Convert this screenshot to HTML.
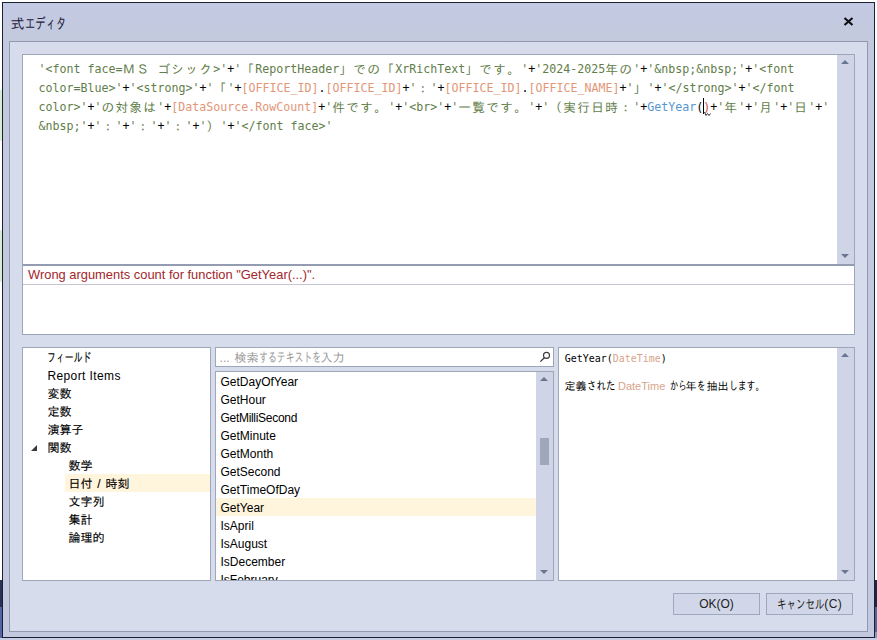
<!DOCTYPE html>
<html lang="ja">
<head>
<meta charset="utf-8">
<title>式エディタ</title>
<style>
html,body{margin:0;padding:0;}
body{width:877px;height:640px;overflow:hidden;position:relative;background:#fff;font-family:"Liberation Sans","IPAGothic","Noto Sans CJK JP",sans-serif;font-size:12px;color:#000;}
.abs{position:absolute;}
#bgL{left:0;top:0;width:3px;height:640px;background:linear-gradient(#fff 0,#fff 90px,#d5efd0 90px,#d5efd0 141px,#fff 141px,#fff 230px,#d5efd0 230px,#d5efd0 282px,#fff 282px,#fff 580px,#273257 580px,#273257 607px,#5564a6 607px,#5564a6 640px);}
#bgR{left:874px;top:0;width:3px;height:640px;background:linear-gradient(#fff 0,#fff 580px,#1f2745 580px,#1f2745 607px,#55639a 607px,#55639a 632px,#8a96c4 632px,#8a96c4 640px);}
#bgB{left:0;top:638px;width:877px;height:2px;background:#c8cde6;}
#win{left:2px;top:2px;width:871px;height:634px;border:1px solid #1b2032;background:#c2c8dd;background-image:linear-gradient(#c4c9e4 0,#c3cadc 40px,#c2c8dd 40px);}
#title{left:10.5px;top:15px;font-size:14px;line-height:18px;color:#1c2038;white-space:nowrap;}
#close{left:843px;top:16px;width:11px;height:11px;}
#client{left:9px;top:41px;width:857px;height:589px;border:1px solid #9199ae;background:#d6dceb;}
.panel{position:absolute;background:#fff;border:1px solid #9ea6b9;box-sizing:border-box;overflow:hidden;}
#editor{left:22px;top:54px;width:833px;height:211px;}
#err{left:22px;top:264px;width:833px;height:71px;border-top:2px solid #939cb1;}
#tree{left:22px;top:347px;width:189px;height:234px;}
#search{left:215px;top:347px;width:339px;height:20px;}
#list{left:215px;top:371px;width:339px;height:210px;}
#desc{left:558px;top:347px;width:297px;height:234px;}
.sb{position:absolute;top:0;right:0;width:17px;bottom:0;background:#cfd5e6;}
.arr{position:absolute;left:4px;width:0;height:0;border-left:4.5px solid transparent;border-right:4.5px solid transparent;}
.arr.up{border-bottom:4.5px solid #6a7690;}
.arr.dn{border-top:4.5px solid #6a7690;}
#code{position:absolute;left:15.4px;top:5px;width:800px;font-family:"DejaVu Sans Mono","Liberation Mono","IPAGothic","Noto Sans CJK JP",monospace;font-size:11.63px;line-height:19px;white-space:pre;color:#000;}
#code .s{color:#5f7d49;}
#code .f{color:#e29678;}
#code .fn{color:#5596cf;}
#code .j{position:relative;top:.5px;line-height:0;letter-spacing:1.33px;font-size:12.67px;font-family:"IPAGothic","Noto Sans CJK JP",monospace;}
.row{position:absolute;left:0;height:18px;line-height:18px;white-space:nowrap;}
.hl{background:#fff5dc;}
#list .row,#tree .row{line-height:20px;}
#tree .row{-webkit-text-stroke:.13px #000;}
.k{font-size:1.1em;display:inline-block;white-space:nowrap;transform-origin:0 50%;vertical-align:top;}
.btn{position:absolute;box-sizing:border-box;height:22px;border:1px solid #a0a8bd;background:#d1d7e8;text-align:center;line-height:21.5px;font-size:12px;color:#222;}
</style>
</head>
<body>
<div id="bgL" class="abs"></div>
<div id="bgR" class="abs"></div>
<div id="bgB" class="abs"></div>
<div id="win" class="abs"></div>
<div id="title" class="abs">式<span class="k" style="width:41px;transform:scaleX(0.673)">エディタ</span></div>
<svg id="close" class="abs" viewBox="0 0 11 11"><path d="M1.5 2 L9.5 9 M9.5 2 L1.5 9" stroke="#111" stroke-width="2.2" fill="none"/></svg>
<div id="client" class="abs"></div>

<div id="editor" class="panel">
<div id="code"><span class="s">'&lt;font face=<span class="j">ＭＳ</span> <span class="j">ゴシック</span>&gt;'</span>+<span class="s">'<span class="j">「</span>ReportHeader<span class="j">」での「</span>XrRichText<span class="j">」です。</span>'</span>+<span class="s">'2024-2025<span class="j">年の</span>'</span>+<span class="s">'&amp;nbsp;&amp;nbsp;'</span>+<span class="s">'&lt;font</span>
<span class="s">color=Blue&gt;'</span>+<span class="s">'&lt;strong&gt;'</span>+<span class="s">'<span class="j">「</span>'</span>+<span class="f">[OFFICE_ID]</span>.<span class="f">[OFFICE_ID]</span>+<span class="s">'<span class="j">：</span>'</span>+<span class="f">[OFFICE_ID]</span>.<span class="f">[OFFICE_NAME]</span>+<span class="s">'<span class="j">」</span>'</span>+<span class="s">'&lt;/strong&gt;'</span>+<span class="s">'&lt;/font</span>
<span class="s">color&gt;'</span>+<span class="s">'<span class="j">の対象は</span>'</span>+<span class="f">[DataSource.RowCount]</span>+<span class="s">'<span class="j">件です。</span>'</span>+<span class="s">'&lt;br&gt;'</span>+<span class="s">'<span class="j">一覧です。</span>'</span>+<span class="s">'<span class="j">（実行日時：</span>'</span>+<span class="fn">GetYear</span>(<span style="color:#c0504d">)</span>+<span class="s">'<span class="j">年</span>'</span>+<span class="s">'<span class="j">月</span>'</span>+<span class="s">'<span class="j">日</span>'</span>+<span class="s">'</span>
<span class="s">&amp;nbsp;'</span>+<span class="s">'<span class="j">：</span>'</span>+<span class="s">'<span class="j">：</span>'</span>+<span class="s">'<span class="j">：</span>'</span>+<span class="s">'<span class="j">）</span>'</span>+<span class="s">'&lt;/font face&gt;'</span></div>
<div class="abs" style="left:680px;top:43px;width:1px;height:16px;background:#000"></div>
<svg class="abs" style="left:681px;top:56px" width="8" height="6" viewBox="0 0 8 6"><path d="M0.5 1 L2 4.5 L3.5 2.5 L5 4.5 L6.5 2.5" stroke="#333" stroke-width="1" fill="none"/></svg>
<div class="sb"><div class="arr up" style="top:5px"></div><div class="arr dn" style="bottom:6px"></div></div>
</div>

<div id="err" class="panel">
<div style="position:absolute;left:5px;top:-1px;height:19px;line-height:19px;color:#a3262b;font-size:12.9px;white-space:nowrap;">Wrong arguments count for function "GetYear(...)".</div>
<div style="position:absolute;left:0;right:0;top:18px;height:1px;background:#c4c7cf;"></div>
</div>

<div id="tree" class="panel">
<div class="row" style="top:0px;left:24.4px;"><span class="k" style="width:44px;transform:scaleX(0.673)">フィールド</span></div>
<div class="row" style="top:18px;left:24.4px;letter-spacing:.4px;-webkit-text-stroke:0">Report Items</div>
<div class="row" style="top:36px;left:24.4px;">変数</div>
<div class="row" style="top:54px;left:24.4px;">定数</div>
<div class="row" style="top:72px;left:24.4px;">演算子</div>
<div class="row" style="top:90px;left:24.4px;">関数</div>
<svg class="abs" style="left:8px;top:97px" width="6" height="6" viewBox="0 0 6 6"><path d="M6 0 L6 6 L0 6 Z" fill="#3a3a3a"/></svg>
<div class="row" style="top:108px;left:45.5px;">数学</div>
<div class="row hl" style="top:126px;left:42px;width:145px;"><span style="margin-left:3.5px;word-spacing:1.5px">日付 / 時刻</span></div>
<div class="row" style="top:144px;left:45.5px;">文字列</div>
<div class="row" style="top:162px;left:45.5px;">集計</div>
<div class="row" style="top:180px;left:45.5px;">論理的</div>
</div>

<div id="search" class="panel">
<div class="row" style="left:3.6px;top:0;line-height:20px;color:#9a9a9a;"><span style="display:inline-block;width:15px">...</span>検索<span class="k" style="width:62px;transform:scaleX(0.673)">するテキストを</span>入力</div>
<svg class="abs" style="left:323px;top:3px" width="12" height="12" viewBox="0 0 12 12"><circle cx="7.5" cy="4.4" r="3" fill="none" stroke="#3a3a3a" stroke-width="1.1"/><path d="M5.4 6.7 L1.3 10.6" stroke="#3a3a3a" stroke-width="1.3"/></svg>
</div>

<div id="list" class="panel">
<div class="row" style="top:0;left:4.5px;">GetDayOfYear</div>
<div class="row" style="top:18px;left:4.5px;">GetHour</div>
<div class="row" style="top:36px;left:4.5px;letter-spacing:-.3px">GetMilliSecond</div>
<div class="row" style="top:54px;left:4.5px;">GetMinute</div>
<div class="row" style="top:72px;left:4.5px;">GetMonth</div>
<div class="row" style="top:90px;left:4.5px;">GetSecond</div>
<div class="row" style="top:108px;left:4.5px;">GetTimeOfDay</div>
<div class="row hl" style="top:126px;left:0;width:321px;"><span style="margin-left:4.5px">GetYear</span></div>
<div class="row" style="top:144px;left:4.5px;">IsApril</div>
<div class="row" style="top:162px;left:4.5px;">IsAugust</div>
<div class="row" style="top:180px;left:4.5px;">IsDecember</div>
<div class="row" style="top:198px;left:4.5px;">IsFebruary</div>
<div class="sb"><div class="arr up" style="top:5px"></div><div class="arr dn" style="bottom:6px"></div>
<div style="position:absolute;left:4px;width:9px;top:66px;height:27px;background:#9fa8ba;"></div></div>
</div>

<div id="desc" class="panel">
<div style="position:absolute;left:5.8px;top:4px;font-family:'DejaVu Sans Mono','Liberation Mono',monospace;font-size:9.97px;line-height:14px;white-space:nowrap;">GetYear(<span style="color:#d9a38a">DateTime</span>)</div>
<div style="position:absolute;left:5.5px;top:30.5px;font-size:11px;line-height:14px;white-space:nowrap;">定義<span class="k" style="width:28.5px;transform:scaleX(0.782)">された</span><span style="color:#d9a38a;display:inline-block;width:51.5px;margin-left:3px">DateTime</span><span class="k" style="width:16px;transform:scaleX(0.682)">から</span>年<span class="k" style="width:10px;transform:scaleX(0.709)">を</span>抽出<span class="k" style="width:35px;transform:scaleX(0.727)">します。</span></div>
<div class="sb"><div class="arr up" style="top:5px"></div><div class="arr dn" style="bottom:6px"></div></div>
</div>

<div class="btn" style="left:673px;top:593px;width:87px;">OK(O)</div>
<div class="btn" style="left:766px;top:593px;width:87px;"><span class="k" style="width:47.5px;transform:scaleX(0.72)">キャンセル</span><span style="letter-spacing:.4px">(C)</span></div>
</body>
</html>
